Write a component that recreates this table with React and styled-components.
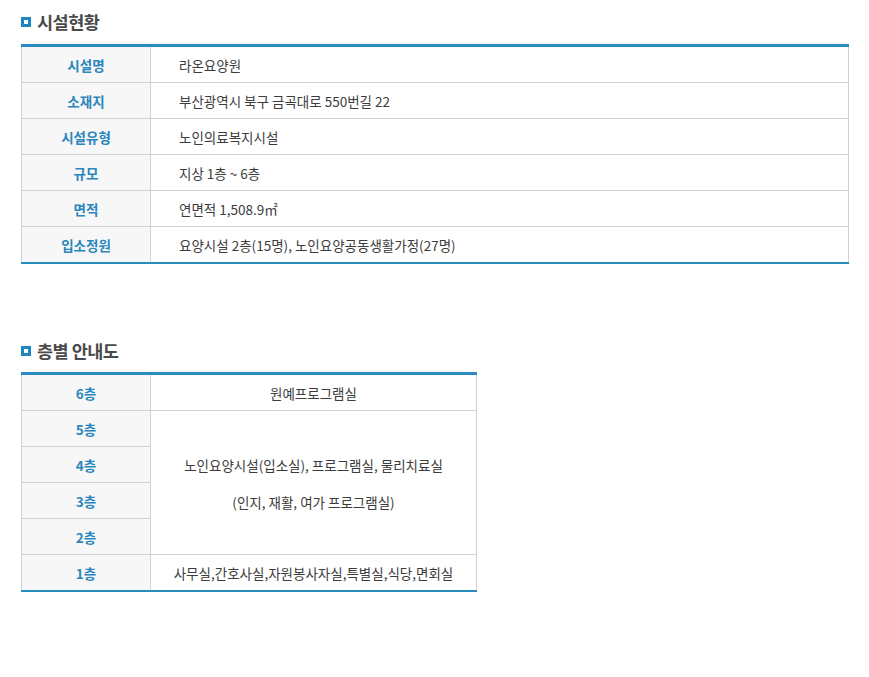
import styled, { createGlobalStyle } from 'styled-components';

const GlobalStyle = createGlobalStyle`
  body {
    margin: 0;
    background: #fff;
    font-family: 'Noto Sans CJK KR', 'Noto Sans', sans-serif;
  }
`;

const Page = styled.div`
  padding: 9px 20px 40px 21px;
`;

const Section = styled.section`
  margin-bottom: ${({ $gap }) => $gap || 0}px;
`;

const Title = styled.h2`
  display: flex;
  align-items: center;
  gap: 6px;
  margin: 0 0 ${({ $space }) => $space ?? 10}px;
  height: 25px;
  font-size: 17.5px;
  font-weight: 700;
  color: #4a4a4a;
  letter-spacing: -0.5px;
`;

const TitleMark = styled.span`
  box-sizing: border-box;
  width: 10px;
  height: 10px;
  border: 3px solid #1f86c0;
  background: #fff;
  margin-top: 1px;
`;

const Table = styled.table`
  width: ${({ $width }) => $width}px;
  border-collapse: collapse;
  border-top: 3px solid #2a8bc0;
  border-bottom: 2px solid #2a8bc0;
  font-size: 13.5px;
`;

const Label = styled.th`
  width: 128px;
  height: 35px;
  padding: 0;
  background: #f7f7f7;
  border: 1px solid #d2d2d2;
  color: #2a86bd;
  font-weight: 700;
  font-size: 13.5px;
  text-align: center;
`;

const Value = styled.td`
  height: 35px;
  padding: 0 0 0 ${({ $center }) => ($center ? 0 : 28)}px;
  border: 1px solid #d2d2d2;
  color: #3c3c3c;
  text-align: ${({ $center }) => ($center ? 'center' : 'left')};
`;

const Lines = styled.div`
  display: flex;
  flex-direction: column;
  gap: 17px;
  padding-top: 1px;
`;

const facility = [
  ['시설명', '라온요양원'],
  ['소재지', '부산광역시 북구 금곡대로 550번길 22'],
  ['시설유형', '노인의료복지시설'],
  ['규모', '지상 1층 ~ 6층'],
  ['면적', '연면적 1,508.9㎡'],
  ['입소정원', '요양시설 2층(15명), 노인요양공동생활가정(27명)'],
];

export default function App() {
  return (
    <Page>
      <GlobalStyle />
      <Section $gap={74}>
        <Title>
          <TitleMark />
          시설현황
        </Title>
        <Table $width={828}>
          <tbody>
            {facility.map(([k, v]) => (
              <tr key={k}>
                <Label>{k}</Label>
                <Value>{v}</Value>
              </tr>
            ))}
          </tbody>
        </Table>
      </Section>

      <Section>
        <Title $space={9}>
          <TitleMark />
          층별 안내도
        </Title>
        <Table $width={456}>
          <tbody>
            <tr>
              <Label>6층</Label>
              <Value $center>원예프로그램실</Value>
            </tr>
            <tr>
              <Label>5층</Label>
              <Value $center rowSpan={4}>
                <Lines>
                  <span>노인요양시설(입소실), 프로그램실, 물리치료실</span>
                  <span>(인지, 재활, 여가 프로그램실)</span>
                </Lines>
              </Value>
            </tr>
            <tr>
              <Label>4층</Label>
            </tr>
            <tr>
              <Label>3층</Label>
            </tr>
            <tr>
              <Label>2층</Label>
            </tr>
            <tr>
              <Label>1층</Label>
              <Value $center>사무실,간호사실,자원봉사자실,특별실,식당,면회실</Value>
            </tr>
          </tbody>
        </Table>
      </Section>
    </Page>
  );
}
